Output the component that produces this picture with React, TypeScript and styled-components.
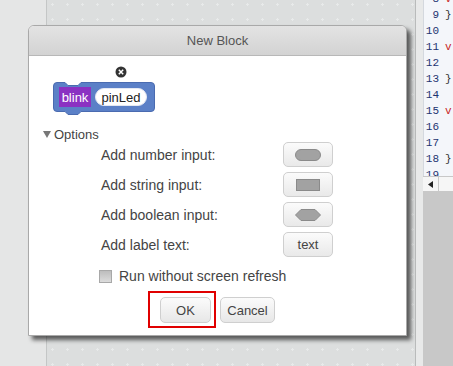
import styled, { createGlobalStyle } from 'styled-components';

const GlobalStyle = createGlobalStyle`
  html, body {
    margin: 0;
    padding: 0;
    background: #dddfdf;
  }
  body {
    font-family: "Liberation Sans", Arial, sans-serif;
  }
`;

const codeLines: { num: number; mark: string }[] = [
  { num: 8, mark: 'v' },
  { num: 9, mark: '}' },
  { num: 10, mark: '' },
  { num: 11, mark: 'v' },
  { num: 12, mark: '' },
  { num: 13, mark: '}' },
  { num: 14, mark: '' },
  { num: 15, mark: 'v' },
  { num: 16, mark: '' },
  { num: 17, mark: '' },
  { num: 18, mark: '}' },
  { num: 19, mark: '' },
];

const NumberShape = () => (
  <svg width="26" height="12" viewBox="0 0 26 12">
    <rect x="0.5" y="0.5" width="25" height="11" rx="5.5" fill="#a2a2a2" stroke="#8a8a8a" />
  </svg>
);

const StringShape = () => (
  <svg width="24" height="12" viewBox="0 0 24 12">
    <rect x="0.5" y="0.5" width="23" height="11" fill="#a2a2a2" stroke="#8a8a8a" />
  </svg>
);

const BooleanShape = () => (
  <svg width="26" height="12" viewBox="0 0 26 12">
    <polygon points="0.5,6 6,0.5 20,0.5 25.5,6 20,11.5 6,11.5" fill="#a2a2a2" stroke="#8a8a8a" />
  </svg>
);

const BlockPreview = () => (
  <BlockSvg width="106" height="52" viewBox="0 0 106 52">
    <path
      d="M1.5,20 Q1.5,16.5 5,16.5 L13,16.5 L16,19.5 L26,19.5 L29,16.5 L99,16.5 Q102.5,16.5 102.5,20 L102.5,42 Q102.5,45.5 99,45.5 L29,45.5 L26,48.5 L16,48.5 L13,45.5 L5,45.5 Q1.5,45.5 1.5,42 Z"
      fill="#5b80c7"
      stroke="#4a6bb0"
    />
    <rect x="7" y="21" width="32" height="20" fill="#8b31c2" />
    <text x="23" y="35.5" textAnchor="middle" fill="#ffffff" fontSize="13" fontFamily="Liberation Sans, Arial, sans-serif">
      blink
    </text>
    <rect x="43.5" y="22.5" width="51" height="17" rx="8.5" fill="#ffffff" stroke="#e4e8f2" />
    <text x="69" y="35.5" textAnchor="middle" fill="#222222" fontSize="13" fontFamily="Liberation Sans, Arial, sans-serif">
      pinLed
    </text>
    <circle cx="69" cy="6" r="5.5" fill="#333333" />
    <path d="M66.8,3.8 L71.2,8.2 M71.2,3.8 L66.8,8.2" stroke="#ffffff" strokeWidth="1.5" />
  </BlockSvg>
);

const App = () => {
  return (
    <>
      <GlobalStyle />
      <Page>
        <LeftStrip />
        <Workspace>
          <GridSvg width="100%" height="100%">
            <defs>
              <pattern id="grid" x="4" y="3" width="15" height="15" patternUnits="userSpaceOnUse">
                <path d="M0,1.5 H3 M1.5,0 V3" stroke="#e8eaea" strokeWidth="1" />
              </pattern>
            </defs>
            <rect width="100%" height="100%" fill="url(#grid)" />
          </GridSvg>
        </Workspace>
        <Divider />
        <CodePanel>
          <CodeLines>
            <CodeInner>
              {codeLines.map((line) => (
                <CodeLine key={line.num}>
                  <LineNum>{line.num}</LineNum>
                  <FoldMark $open={line.mark === 'v'}>{line.mark}</FoldMark>
                </CodeLine>
              ))}
            </CodeInner>
          </CodeLines>
          <HScroll>
            <ScrollArrow>
              <svg width="5" height="7" viewBox="0 0 5 7">
                <polygon points="5,0 5,7 0,3.5" fill="#222" />
              </svg>
            </ScrollArrow>
          </HScroll>
          <CodeRest />
        </CodePanel>

        <Dialog>
          <TitleBar>New Block</TitleBar>
          <Body>
            <BlockPreview />
            <OptionsHeader>
              <Caret />
              Options
            </OptionsHeader>
            <OptionGrid>
              <OptionLabel>Add number input:</OptionLabel>
              <ShapeButton>
                <NumberShape />
              </ShapeButton>
              <OptionLabel>Add string input:</OptionLabel>
              <ShapeButton>
                <StringShape />
              </ShapeButton>
              <OptionLabel>Add boolean input:</OptionLabel>
              <ShapeButton>
                <BooleanShape />
              </ShapeButton>
              <OptionLabel>Add label text:</OptionLabel>
              <ShapeButton>text</ShapeButton>
            </OptionGrid>
            <CheckRow>
              <CheckBox />
              Run without screen refresh
            </CheckRow>
            <ButtonRow>
              <Highlighted>
                <DialogButton $wide>OK</DialogButton>
                <RedFrame />
              </Highlighted>
              <DialogButton>Cancel</DialogButton>
            </ButtonRow>
          </Body>
        </Dialog>
      </Page>
    </>
  );
};

export default App;

const Page = styled.div`
  position: relative;
  display: flex;
  width: 453px;
  height: 366px;
  overflow: hidden;
`;

const LeftStrip = styled.div`
  width: 46px;
  background: #e5e6e6;
  border-right: 1px solid #c4c6c6;
`;

const Workspace = styled.div`
  position: relative;
  flex: 1;
  background: #dcdede;
  border-right: 1px solid #b9bbbb;
`;

const GridSvg = styled.svg`
  display: block;
`;

const Divider = styled.div`
  width: 7px;
  background: #e8e9e9;
`;

const CodePanel = styled.div`
  width: 30px;
  display: flex;
  flex-direction: column;
`;

const CodeLines = styled.div`
  height: 176px;
  overflow: hidden;
  background: #f4f6fa;
  border-left: 1px solid #d4d8de;
`;

const CodeInner = styled.div`
  margin-top: -9px;
`;

const CodeLine = styled.div`
  display: flex;
  height: 16px;
  line-height: 16px;
  font-family: "Liberation Mono", "DejaVu Sans Mono", monospace;
  font-size: 11px;
`;

const LineNum = styled.span`
  width: 15px;
  text-align: right;
  color: #1d3470;
`;

const FoldMark = styled.span<{ $open: boolean }>`
  margin-left: 6px;
  color: ${(p) => (p.$open ? '#c81e1e' : '#333333')};
`;

const HScroll = styled.div`
  height: 14px;
  display: flex;
  background: #f6f6f6;
  border-top: 1px solid #c8c8c8;
  border-bottom: 1px solid #c8c8c8;
`;

const ScrollArrow = styled.div`
  width: 15px;
  display: flex;
  align-items: center;
  justify-content: center;
  border-right: 1px solid #c8c8c8;
`;

const CodeRest = styled.div`
  flex: 1;
  background: #c8c8c8;
`;

const Dialog = styled.div`
  position: absolute;
  left: 28px;
  top: 25px;
  width: 379px;
  height: 311px;
  box-sizing: border-box;
  background: #ffffff;
  border: 1px solid #a9a9a9;
  border-radius: 6px 6px 0 0;
  box-shadow: 4px 4px 4px rgba(0, 0, 0, 0.6);
  display: flex;
  flex-direction: column;
`;

const TitleBar = styled.div`
  height: 29px;
  line-height: 29px;
  text-align: center;
  font-size: 13px;
  color: #555555;
  background: linear-gradient(#e3e3e3, #d3d3d3);
  border-bottom: 1px solid #b8b8b8;
  border-radius: 5px 5px 0 0;
`;

const Body = styled.div`
  display: flex;
  flex-direction: column;
  align-items: flex-start;
  color: #444444;
  font-size: 14px;
`;

const BlockSvg = styled.svg`
  display: block;
  margin: 10px 0 0 23px;
`;

const OptionsHeader = styled.div`
  display: flex;
  align-items: center;
  height: 16px;
  margin: 8px 0 0 14px;
  gap: 3px;
  font-size: 13px;
  color: #444444;
`;

const Caret = styled.span`
  width: 0;
  height: 0;
  border-left: 4.5px solid transparent;
  border-right: 4.5px solid transparent;
  border-top: 7px solid #777777;
  margin-top: 1px;
`;

const OptionGrid = styled.div`
  display: grid;
  grid-template-columns: 182px 50px;
  grid-auto-rows: 25px;
  row-gap: 5px;
  margin: 0 0 0 72px;
  align-items: center;
`;

const OptionLabel = styled.span`
  color: #444444;
`;

const ShapeButton = styled.button`
  height: 25px;
  width: 50px;
  padding: 0;
  display: flex;
  align-items: center;
  justify-content: center;
  box-sizing: border-box;
  border: 1px solid #cfcfcf;
  border-radius: 5px;
  background: linear-gradient(#fbfbfb, #e9e9e9);
  font-family: "Liberation Sans", Arial, sans-serif;
  font-size: 13px;
  color: #444444;
`;

const CheckRow = styled.div`
  display: flex;
  align-items: center;
  gap: 7px;
  height: 16px;
  margin: 11px 0 0 70px;
  color: #444444;
`;

const CheckBox = styled.span`
  width: 11px;
  height: 11px;
  border: 1px solid #a8a8a8;
  background: linear-gradient(#bdbdbd, #dcdcdc);
`;

const ButtonRow = styled.div`
  align-self: stretch;
  display: flex;
  justify-content: center;
  gap: 9px;
  margin-top: 13px;
`;

const Highlighted = styled.div`
  position: relative;
  display: flex;
`;

const RedFrame = styled.span`
  position: absolute;
  left: -12px;
  top: -6px;
  width: 64px;
  height: 33px;
  border: 2px solid #e00000;
`;

const DialogButton = styled.button<{ $wide?: boolean }>`
  height: 26px;
  width: ${(p) => (p.$wide ? '51px' : '55px')};
  padding: 0;
  box-sizing: border-box;
  border: 1px solid #cfcfcf;
  border-radius: 5px;
  background: linear-gradient(#fbfbfb, #e7e7e7);
  font-family: "Liberation Sans", Arial, sans-serif;
  font-size: 13px;
  color: #444444;
`;
